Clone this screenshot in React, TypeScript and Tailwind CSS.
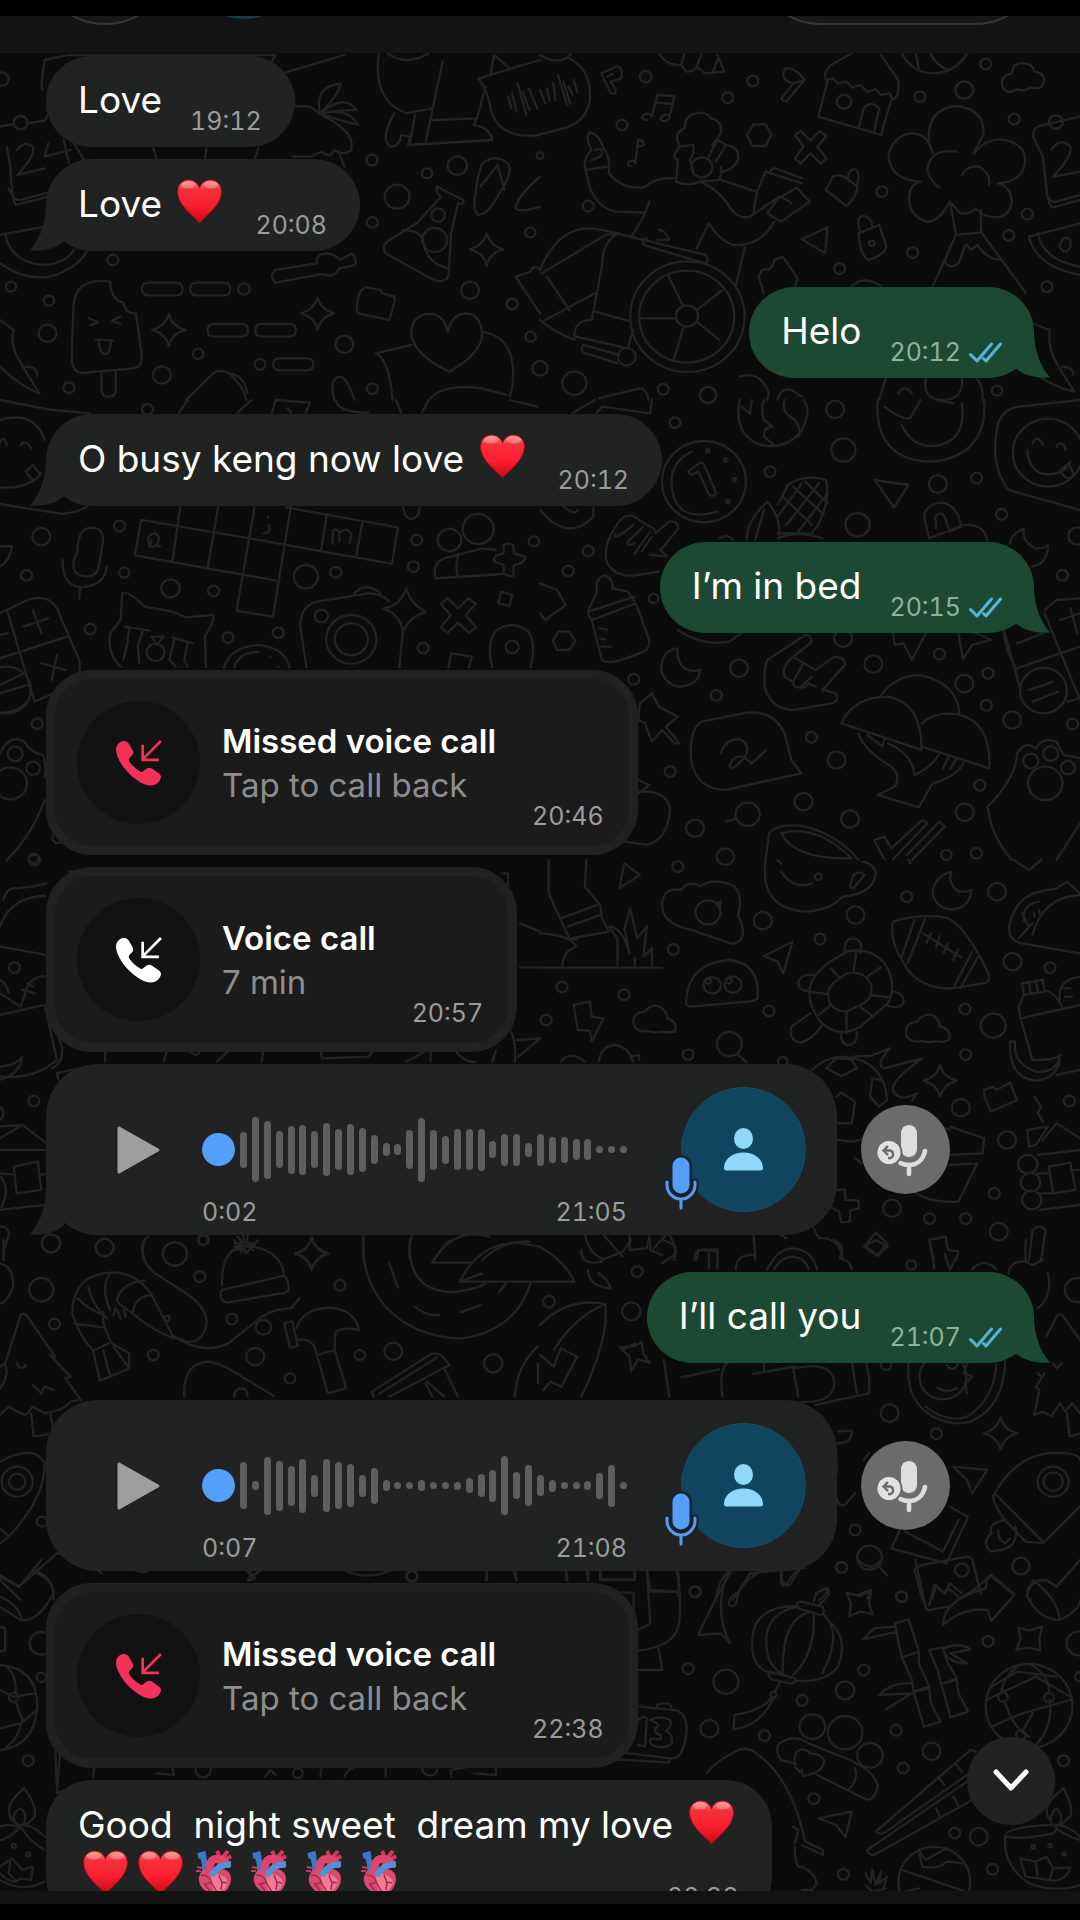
import React from "react";

interface DoodleTile {
  x: number;
  y: number;
  circles: number[][];
  stars?: number[][];
  paths: string[];
}

// Wallpaper drawings, one group per area of the background
const doodles: DoodleTile[] = [
  {
    x: 0,
    y: 0,
    circles: [
      [5, 237, 20], [328, 780, 16], [32, 860, 15], [142, 902, 15], [138, 1000, 26], [200, 1163, 16],
      [470, 1125, 26], [575, 1062, 15], [755, 1093, 16], [708, 867, 17], [1000, 1033, 26], [1080, 480, 16],
      [1240, 520, 15], [1328, 497, 28], [1153, 590, 36], [1081, 667, 16], [1540, 697, 15], [1365, 871, 26],
      [1487, 912, 16], [1541, 1010, 15], [1081, 1166, 16], [1272, 645, 20], [1262, 720, 36], [60, 368, 20],
    ],
    stars: [[490, 990], [922, 940], [1413, 748]],
    paths: [
      "M431 848H511Q530 848 530 867T511 886H431Q412 886 412 867T431 848M571 848H650Q669 848 669 867T650 886H571Q552 886 552 867T571 848",
      "M622 972H701Q720 972 720 991T701 1010H622Q603 1010 603 991T622 972M760 972H840Q859 972 859 991T840 1010H760Q741 1010 741 991T760 972M812 1075H892Q910 1075 910 1093T892 1111H812Q793 1111 793 1093T812 1075",
      "M250 852Q215 870 213 920L208 1080Q212 1118 240 1119L380 1106Q412 1105 412 1070L395 940Q365 942 358 908Q322 900 320 845Q280 838 250 852M295 1118V1175Q300 1192 317 1190Q335 1190 336 1170V1113M258 955L285 967L262 976M350 950L325 962L350 972M278 1018L328 1022M287 1020Q287 1060 305 1062Q322 1060 322 1020",
      "M20 440L30 500Q35 600 45 615L160 585M25 565Q40 605 60 600L150 575M50 450Q70 420 95 440Q105 465 50 525L130 505M140 430L130 470L205 450M185 420L200 490M0 380L40 372M78 370L130 362Q150 330 135 330M215 430L250 490",
      "M125 270Q115 270 130 180L200 165H800L780 200M830 217L1000 165M445 445L455 475M595 475L600 445M740 475L750 445",
      "M930 340Q910 260 990 250Q980 290 930 340Q1000 280 1035 330Q980 330 930 340Q1010 320 1040 375Q980 360 930 340M850 318L900 320Q930 345 960 360Q1030 400 1020 450Q1000 470 970 450L960 465Q940 465 935 455L900 470L850 470M985 460L1000 500",
      "M0 705L130 680M0 790Q110 870 210 800Q250 770 255 745M15 700Q30 790 130 795Q190 790 215 750",
      "M0 960L40 990Q30 1020 45 1060Q70 1110 115 1180Q60 1160 0 1100M75 1100Q110 1100 108 1130",
      "M800 810L920 790Q915 760 950 760Q980 765 985 780L1020 762Q1035 765 1032 795L985 805Q975 830 950 825Q925 820 920 825L800 848Q780 830 800 810",
      "M1270 560L1345 600Q1350 615 1330 610L1310 700L1302 830Q1290 850 1260 840L1120 760Q1105 740 1130 720L1210 670L1280 590Q1260 570 1270 560M1170 690Q1225 690 1230 730Q1240 790 1300 805",
      "M1100 160Q1080 300 1180 340L1255 325M1285 185L1235 430M1145 340Q1100 420 1135 440Q1160 440 1165 405L1190 410L1185 435L1430 420Q1420 380 1375 375L1385 355L1255 360M1205 345L1190 430M1385 355L1410 260M1125 160Q1180 200 1245 160",
      "M1390 235L1568 180M1390 235Q1420 280 1425 330Q1450 420 1568 405M1475 290L1485 325M1487 280L1500 335M1503 250L1528 345M1518 275L1537 330M1535 265L1560 325M1435 165L1425 220M1440 170L1480 205",
      "M1400 490Q1440 460 1475 490Q1490 520 1450 580Q1420 640 1390 645Q1370 630 1380 590Q1385 530 1400 490M1395 560L1445 495L1465 570M1568 530Q1500 590 1497 625Q1510 640 1568 620",
      "M1045 875L1060 862L1105 870L1110 880L1145 890Q1150 900 1130 960L1040 940Q1030 930 1045 875",
      "M1300 995Q1290 940 1240 942Q1190 950 1195 1010Q1210 1070 1305 1115Q1400 1060 1400 1000Q1395 940 1350 940Q1310 945 1300 995M1195 1035L1092 1060Q1130 1080 1140 1200M1400 995Q1490 1010 1490 1120Q1490 1160 1480 1190M1250 1195Q1290 1150 1400 1165L1470 1185",
      "M540 1200L620 1120Q640 1105 665 1120Q710 1160 715 1200M665 1120Q710 1125 718 1180M970 1200Q955 1130 990 1130Q1010 1140 1030 1200M1568 810Q1550 790 1540 815L1497 830L1568 940",
    ],
  },
  {
    x: 540,
    y: 0,
    circles: [
      [307, 230, 17], [238, 375, 16], [545, 293, 16], [618, 243, 16], [140, 618, 16], [883, 305, 21],
      [1103, 290, 16], [1232, 270, 26], [1294, 192, 16], [1377, 357, 16], [993, 575, 16], [1082, 758, 16],
      [870, 806, 16], [1361, 706, 16], [1415, 642, 16], [1472, 860, 16], [428, 950, 166], [426, 950, 138],
      [427, 948, 32], [252, 1070, 26], [100, 1150, 35], [358, 1168, 16], [488, 1185, 24], [470, 502, 30],
      [963, 730, 8], [1327, 1172, 15], [1498, 366, 20], [0, 467, 10], [0, 1105, 22],
    ],
    paths: [
      "M0 165Q60 200 90 162M85 175Q150 210 145 300Q135 360 80 382L0 403M0 270L15 310M20 265L28 300M38 250L45 300M52 225L78 313M68 245L88 312M82 260L95 285M98 240L107 275",
      "M178 220L225 198Q245 210 235 235L205 245L220 270Q222 285 205 280L178 220M195 230L212 222",
      "M310 360Q290 358 300 345Q320 335 325 350L340 285L390 288L375 355Q365 370 350 358Q355 340 375 345M335 308L385 312",
      "M265 498Q250 498 257 485Q275 478 277 490L285 418Q300 420 302 435L285 440",
      "M345 160Q370 200 410 195L420 160M410 195L425 215Q450 215 455 200L470 160M455 200L480 220L535 215L515 165M515 180L500 220",
      "M712 205Q740 200 768 240L715 305Q695 300 705 290L735 250Q695 240 712 205M735 250L768 240",
      "M905 160L845 195Q820 220 830 240L850 235L865 250L890 245L905 262L930 255L950 275L975 268L990 285L1015 280L1025 298Q1045 290 1040 240L990 165M835 245L808 350L990 405L1020 300M925 385L940 325Q960 300 985 325L970 395",
      "M1050 160Q1080 220 1145 220Q1210 215 1240 160M1090 160L1100 205M1135 162Q1150 200 1190 210",
      "M1345 265Q1330 230 1370 220Q1375 185 1405 190Q1430 190 1435 215Q1470 220 1462 250Q1455 270 1425 262Q1410 275 1385 268Q1360 285 1345 265",
      "M620 373H655L672 405L655 438H618L600 405L620 373",
      "M740 405L758 393L785 422L812 393L832 408L805 440L832 475L815 490L785 460L757 490L740 475L765 440L740 405",
      "M1130 430Q1120 330 1205 318Q1290 325 1288 400L1260 460M1260 460Q1300 410 1350 420Q1415 435 1408 490Q1400 545 1330 550M1330 550Q1370 560 1370 610Q1360 660 1305 650Q1280 645 1265 625Q1245 645 1220 640L1190 605Q1160 665 1125 665Q1070 650 1072 590Q1075 550 1105 545M1105 545Q1015 540 1012 465Q1030 400 1085 400Q1130 405 1140 460M1210 455Q1130 445 1125 510Q1135 550 1160 562M1225 525Q1240 495 1275 500Q1310 520 1303 555",
      "M1190 605L1208 705L1140 860M1280 630V695L1410 878M1208 705L1280 697M1195 730L1175 785Q1190 810 1215 790L1230 750Q1235 720 1250 750L1270 735Q1300 780 1335 778",
      "M1568 350L1450 378Q1430 385 1432 410L1460 470L1470 560Q1475 620 1490 622L1568 600M1470 580Q1480 610 1500 605L1568 585M1485 450Q1510 410 1540 440Q1545 470 1490 530L1568 515",
      "M850 530Q870 520 890 535L922 560Q920 590 890 618L830 570L850 530M893 535Q900 500 920 510Q930 530 920 555M925 700L985 675L1005 735Q1010 760 955 780Q930 770 925 700M930 695Q915 650 940 648Q965 655 965 680",
      "M760 718L835 682L828 760L760 718M1420 710L1568 670M1420 710Q1440 800 1568 825M1445 700Q1460 780 1568 800M1508 740Q1520 700 1540 720Q1545 755 1520 755L1508 740",
      "M145 398Q170 400 185 445Q205 470 200 520Q240 570 300 562Q340 530 395 535M145 398Q130 410 150 450Q120 480 135 520Q150 620 220 635L305 638M160 450Q190 440 175 470L150 480M135 510L195 500M318 605Q300 660 265 710",
      "M400 480Q380 470 400 450L405 435Q385 400 420 385Q420 340 465 338Q490 340 495 355Q530 360 525 400L500 435M400 480L395 545Q430 560 465 545L520 540Q530 520 525 500M490 470L515 420L540 435L510 485M540 435Q580 440 575 480Q560 510 530 515M410 440L445 435Q450 460 435 480L445 510",
      "M470 548Q520 570 550 620Q575 660 610 650L695 590L660 640L700 665L783 605L745 563L650 620M525 540L630 575L655 515L760 550M665 520Q675 500 690 508L762 535M630 575L620 640M695 590Q720 600 730 610M680 665Q640 740 560 735Q520 720 490 670L455 745M595 740L568 860",
      "M0 810Q60 660 180 690L480 765Q495 780 480 790L300 735Q295 715 310 715M5 820L190 705L230 700Q180 720 180 800L150 960M15 960L160 880M20 830L85 930M0 960Q50 1000 100 1020Q95 960 150 960M160 935L265 965M125 1035L230 1065M125 1035Q115 1060 135 1060L225 1090M105 1010L255 1045L270 990M340 720L375 720Q365 690 345 690",
      "M290 955H395M372 825L415 918M530 870L455 930M520 1020L455 965M390 1075L415 985M650 880L635 830Q645 800 660 810Q680 800 680 780L705 770L748 835L740 860M905 858Q940 825 990 858",
      "M580 1130Q640 1110 665 1180L660 1200M690 1200Q700 1160 730 1170L760 1190M985 1200L1005 1132M1120 1135Q1110 1200 1170 1200Q1230 1200 1225 1135M1040 1180Q1060 1150 1080 1180M1430 970L1480 990Q1475 1030 1490 1070Q1510 1110 1552 1175Q1500 1165 1450 1130M1515 1100Q1550 1100 1548 1125M1265 1132Q1290 1160 1285 1200M170 1195L290 1165Q310 1165 315 1200",
    ],
  },
  {
    x: 0,
    y: 400,
    circles: [
      [428, 28, 16], [120, 410, 26], [347, 378, 16], [77, 526, 16], [361, 518, 15], [495, 565, 27],
      [620, 573, 16], [262, 687, 16], [662, 713, 16], [808, 698, 16], [888, 530, 35], [975, 517, 16],
      [933, 648, 19], [1020, 718, 73], [1020, 718, 48], [1210, 420, 16], [1200, 500, 16], [1305, 420, 34],
      [1388, 387, 45], [1228, 744, 16], [1487, 741, 19], [1550, 424, 15], [108, 971, 16], [44, 1062, 22],
      [96, 1105, 20], [30, 1150, 48], [20, 870, 70], [168, 1313, 16], [452, 757, 26], [98, 1375, 14],
    ],
    paths: [
      "M0 60Q100 30 130 120M0 262Q80 270 120 220M0 312L180 342Q240 335 260 312M0 0L140 28L260 40M0 130Q10 100 20 135M60 135Q75 115 90 145M75 215L95 195L115 220Q100 260 75 215",
      "M225 455Q225 385 265 382Q305 385 298 430L287 500Q280 535 240 528Q205 520 215 480L225 455M182 480Q180 560 240 562Q305 555 310 500M232 565L230 595",
      "M410 360L725 415L1138 492L1155 382L830 322M410 360L392 466L803 542M525 312L500 486M635 312L603 504M740 315L687 632L793 650L845 315M948 350L932 453M1052 368L1034 470",
      "M435 440Q420 405 450 400Q470 410 455 435Q430 450 440 420M455 435L465 440M780 375Q790 400 765 400M778 350V352M965 430L968 390Q990 380 985 425M985 400Q1010 375 1020 405L1015 430",
      "M0 640L80 600Q140 580 165 625L230 780Q235 820 225 850L100 905L20 630M0 775L195 710M68 680L140 655M95 630L120 700M120 790L190 810M165 765L150 840M0 705L22 700M0 855L70 820M0 880L80 855M0 940Q90 930 90 870",
      "M350 800Q310 760 320 700L350 660L355 580Q370 570 420 620L500 635L540 652L620 645Q620 670 595 710L598 800M362 680L435 692M500 712L560 730M375 685L370 730L358 780M415 690L400 740L405 790M505 720L492 780L510 800M545 728L535 780L545 800M440 710H475L455 735L440 710",
      "M650 803Q670 740 750 735Q830 745 840 803M680 803Q690 760 750 755M785 770V772M808 800V802",
      "M890 803L872 680Q870 620 920 605L1070 580Q1110 580 1130 605M1170 690L1160 803M1025 585Q1060 540 1105 580M1113 625Q1160 620 1180 565Q1190 610 1235 635Q1190 650 1170 695Q1160 640 1113 625",
      "M1280 612L1300 595L1330 625L1360 595L1382 612L1352 645L1382 682L1362 698L1330 668L1300 698L1280 682L1308 645L1280 612",
      "M1455 575L1487 585L1480 618L1447 610L1455 575M1310 760L1370 770L1362 803M1310 760L1302 803M1430 803Q1400 680 1487 675Q1570 680 1540 803",
      "M1265 535Q1250 480 1310 470L1400 445L1440 450M1265 535L1460 522M1330 470Q1320 500 1330 530M1462 435Q1475 425 1490 435L1492 460L1525 470Q1525 490 1492 495L1490 528Q1475 530 1462 520V495L1435 485Q1430 465 1462 460V435",
      "M0 440L35 438Q30 480 0 500M520 38L545 0M690 38L730 0M790 38L800 0L900 8L888 38M975 0Q980 38 1070 38M1150 0L1165 38M1225 38L1245 0M1480 0L1560 20M835 25L845 38M1170 312Q1170 355 1195 357Q1220 350 1218 320",
      "M0 1060Q30 1000 70 1025Q90 1060 125 1065Q135 1100 130 1130M130 1200Q90 1310 20 1380",
    ],
  },
  {
    x: 540,
    y: 400,
    circles: [
      [392, 68, 16], [668, 215, 16], [857, 28, 26], [881, 150, 35], [922, 374, 35], [476, 245, 122],
      [1475, 158, 102], [1155, 252, 26], [1268, 234, 16], [1340, 343, 16], [140, 453, 16], [82, 513, 16],
      [578, 805, 26], [968, 792, 26], [1160, 762, 16], [880, 715, 26], [1517, 526, 16], [1232, 851, 26],
      [1301, 820, 16], [1296, 916, 16], [512, 886, 16], [272, 838, 16], [788, 1012, 16], [378, 1115, 16],
      [861, 1080, 26], [1371, 960, 26], [1546, 972, 16], [1277, 1156, 16], [765, 1205, 26], [603, 1243, 35],
      [450, 1285, 26], [900, 1257, 26], [1233, 1237, 26], [1180, 1365, 15], [1267, 1360, 16], [538, 1370, 25],
      [1425, 1083, 22], [1483, 1061, 22], [1533, 1103, 20], [1467, 1150, 50], [1462, 872, 68], [1560, 408, 26],
      [487, 152, 5], [539, 180, 5], [564, 239, 5], [545, 305, 5], [330, 595, 14],
    ],
    paths: [
      "M515 335Q400 370 384 270Q370 190 440 155M430 215L465 187L475 190L512 280Q500 295 490 282L460 215L440 225L430 215",
      "M580 0Q560 100 640 135Q720 150 760 90Q790 30 765 0M650 0Q640 30 650 60L675 80Q650 80 650 110L680 135M710 0Q700 40 740 60Q760 90 750 110M615 0L610 40L585 20",
      "M980 0Q970 180 1135 185Q1300 170 1290 0M1050 75Q1080 140 1140 138Q1240 130 1225 10M1000 20Q1050 60 1075 55L1105 0M1150 0L1200 10",
      "M1568 0L1390 20Q1330 30 1325 100Q1310 200 1360 270L1568 330M1415 150Q1420 230 1490 222Q1530 215 1540 185M1430 130Q1445 100 1460 135M1500 140Q1515 115 1527 150M1510 210L1535 190L1550 225Q1530 250 1510 210",
      "M690 315L720 255Q770 220 830 240Q845 290 810 370L790 400L690 400M600 420Q600 360 660 305Q700 350 695 415M625 420L650 330M705 290L790 375M735 260L825 345M770 245L835 310M690 350L760 250M715 375L810 250M750 395L835 280M690 415Q750 390 820 415",
      "M972 240L1070 255L1028 322L972 240M1130 415L1115 350Q1120 310 1170 308Q1215 320 1222 380L1190 395M1150 385L1148 350Q1165 330 1175 350L1190 395M1130 415L1230 375Q1290 370 1298 420M1365 430Q1370 400 1405 385Q1400 430 1440 445Q1470 445 1475 435Q1475 490 1430 500",
      "M220 380Q240 340 270 348L320 380Q340 390 335 400L375 365Q400 360 402 385L350 450L370 470L320 465M220 380Q180 440 195 490Q220 530 270 527L345 515M240 400L270 375M255 425L300 380M275 460L320 395M295 455L325 410M240 400Q210 420 220 400M255 425Q250 440 275 430",
      "M0 550L50 570L75 615L15 660L0 640M0 330Q80 430 155 350L155 312M60 312Q100 350 110 330M95 38L160 0M165 38L180 20L320 40L325 0",
      "M165 580Q160 530 190 527Q215 540 210 565L255 575L278 610L150 660Q130 640 150 610L165 580M140 635L275 590M150 660L180 780Q200 800 300 755Q325 740 315 715L280 615M172 685L195 688M175 715L190 718M178 740L205 740",
      "M53 695H85L103 723L85 750H50L37 723L53 695M400 745Q350 750 352 815Q370 860 410 860Q460 855 465 810Q430 820 410 795Q395 770 400 745",
      "M400 690Q470 740 550 725L590 695M1025 700L1030 735L1055 730L1080 780L1120 700M1215 700L1228 778L1255 735L1310 720L1260 697M520 415Q545 400 560 420",
      "M660 780L770 705Q795 710 785 730L735 770L800 810L855 770Q885 770 885 795L820 870L860 880Q870 905 845 910L740 930Q670 930 652 860Q650 800 660 780M735 770Q700 800 710 830L735 845M735 845L765 790M735 845Q735 865 755 862L790 830M755 862Q770 865 780 850L800 860",
      "M325 880L345 920L400 950L365 980L405 1030L390 1030L355 990L325 1025L305 970L285 960L290 910L325 880",
      "M470 965L600 938Q680 930 710 1000L730 1080L758 1120L540 1170Q460 1170 440 1090Q430 990 470 965M525 1060Q540 1015 580 1018Q615 1035 595 1070Q560 1115 550 1100Q560 1065 590 1070L615 1090L655 1052",
      "M875 970Q910 890 1010 890Q1110 910 1108 1050L875 970M990 885Q1040 820 1110 827Q1210 850 1218 940M1108 970Q1150 930 1220 945Q1310 970 1305 1105L1108 1040M925 1000Q940 1050 1020 1100Q1050 1130 1030 1160L980 1185L1100 1222L1140 1150Q1210 1130 1230 1090M1010 1030Q1080 1060 1088 1125Q1140 1100 1160 1060M950 1005L995 1040L1000 1015M1170 1105L1190 1065L1210 1075L1190 1108",
      "M1385 1060Q1410 1020 1440 1045Q1460 1010 1500 1025L1520 1065L1568 1075M1385 1060Q1385 1130 1300 1220Q1310 1310 1370 1380M1568 1270L1500 1380",
      "M1465 630L1500 600L1568 595M1350 700L1395 870M1465 640L1568 900M1385 805L1568 740M1345 690Q1350 750 1385 810M1385 730L1460 700M1530 905L1568 895M1510 660L1568 640M1540 625L1560 700M1420 870L1490 845M1430 905L1505 875",
      "M973 1320L1000 1310L1020 1345L1110 1260L1125 1270L1025 1378M1065 1365L1160 1265L1175 1280L1080 1380M970 1320L1000 1378",
      "M655 1380L665 1300Q690 1270 760 1278Q860 1300 925 1380M700 1300Q800 1270 905 1375Q740 1380 700 1300M540 1265L570 1255M285 1140L318 1155L285 1180M290 1175Q370 1170 378 1230Q370 1320 310 1335L230 1322",
    ],
  },
  {
    x: 0,
    y: 860,
    circles: [
      [42, 323, 16], [98, 723, 16], [148, 1150, 27], [304, 1163, 26], [508, 1182, 35], [590, 1140, 16],
      [568, 570, 14], [100, 0, 16],
    ],
    stars: [[905, 1182]],
    paths: [
      "M0 200Q30 110 130 108M10 120Q20 80 50 85Q100 80 135 70M0 260L135 285M0 465L130 435L165 600Q100 660 0 650M155 490L180 560Q185 610 150 625M0 620Q50 615 65 590Q60 640 0 660M60 440L80 380Q100 345 130 350M65 390L100 400M0 360Q20 370 25 400M0 400L60 440M80 370L95 380",
      "M0 740Q20 760 0 780M0 800L65 795L135 850M0 835L65 795M0 870H130M0 940L45 945M40 920L110 905L120 990L48 1000L40 920M120 945L140 940M0 950Q30 980 5 1040M0 1050L130 1035",
      "M0 1100Q30 1100 25 1130Q10 1160 10 1200M420 1200Q400 1150 430 1130M1055 1200V1120M1190 1200Q1185 1150 1200 1120M1260 1200Q1320 1100 1420 1130M1400 1200Q1460 1140 1540 1145",
      "M705 1120L710 1145M690 1130L705 1148M720 1125L715 1150M680 1150H705M740 1150H715M690 1170L710 1155M735 1170L718 1155M710 1175V1160",
      "M305 605V571M475 605L485 571M760 605L765 571M630 605L665 571M930 571L935 595L1070 590L1085 571M1180 605L1240 571M1250 571V605M1320 571Q1350 610 1380 605M1430 605L1440 571M1480 510Q1500 540 1495 605M1500 540L1568 535L1505 590M1510 190L1568 215M1510 322H1568M200 35H460M205 35L215 60M1455 40H1475V80M165 640L230 625M165 640L170 660",
    ],
  },
  {
    x: 540,
    y: 860,
    circles: [
      [400, 20, 16], [647, 182, 26], [488, 157, 36], [916, 165, 26], [1065, 110, 16], [813, 237, 16],
      [387, 268, 16], [64, 381, 16], [244, 404, 16], [18, 480, 16], [500, 376, 25], [560, 374, 25],
      [665, 453, 16], [550, 552, 36], [430, 584, 16], [1327, 95, 26], [1372, 305, 26], [1481, 323, 16],
      [1234, 447, 16], [1316, 497, 36], [1236, 584, 16], [1222, 743, 26], [1537, 723, 16], [1356, 840, 26],
      [1319, 1000, 16], [1416, 913, 28], [1424, 967, 28], [1428, 1020, 28], [1022, 1045, 26], [1131, 1076, 16],
      [1236, 1076, 16], [1332, 1115, 26], [808, 50, 10], [488, 363, 8], [548, 362, 8], [705, 605, 14],
    ],
    stars: [[1162, 662]],
    paths: [
      "M25 0V100L58 175L85 235L105 240M135 0L130 80L175 135L180 175L200 215M60 175L165 135M80 200L175 165M90 235L200 215M0 220Q90 225 105 260Q65 275 65 322M0 323H355M200 200L225 235V320M205 200Q240 205 260 280L245 205L262 145L282 235L310 200L300 290L325 265V320M275 295V320",
      "M245 10L290 45L230 85L245 10M355 130Q360 80 410 90Q430 60 465 78Q510 50 565 80Q590 110 575 165Q610 240 560 252L440 210Q350 190 355 130M510 130L525 125L522 145",
      "M655 0Q635 150 780 155Q840 150 880 110Q970 100 975 40Q970 10 935 5M700 35Q735 90 790 70M900 80L910 45Q930 30 942 45L910 85L900 80M690 0L700 10M1070 0L1075 10",
      "M1195 35Q1140 50 1140 105Q1155 150 1200 148Q1250 140 1252 90Q1215 105 1200 80Q1185 60 1195 35M1375 0L1420 30L1455 0M650 288L733 245L706 340L690 305L650 288",
      "M425 420Q430 310 550 300Q640 310 632 415Q620 425 600 425L440 440Q420 440 425 420",
      "M835 310L890 275Q960 260 1000 310Q1040 370 1010 430L930 500Q860 540 810 480Q760 400 800 345L835 310M850 370L890 340Q940 330 960 370Q970 410 940 430L890 455Q830 450 838 390L850 370M918 280L910 335M990 322L950 350M1015 412L960 405M968 470L930 440M890 520V455M810 465L845 435M778 395L835 402M845 325L870 355M885 280Q880 235 910 235Q940 240 930 278M795 345Q750 340 750 375Q760 395 780 392M1025 395Q1060 400 1055 430Q1040 450 1005 435M785 460L730 500Q720 540 755 548Q790 540 820 495M875 520Q870 550 895 556Q925 550 920 515",
      "M1025 185Q1100 160 1180 173Q1230 190 1300 335Q1310 360 1295 368L1200 385Q1130 390 1080 345Q1010 250 1025 185M1088 180L1050 290M1118 178L1068 308M1275 285L1220 385M1255 275L1200 385M1115 222L1222 292M1135 220L1122 250M1160 228L1150 262M1185 250L1172 280M1215 268L1200 300",
      "M1568 100L1530 65L1500 85L1450 95Q1380 110 1362 200Q1360 245 1400 250L1568 280M1430 225Q1460 110 1568 105M1405 185Q1400 130 1450 125M1390 235L1430 190M1420 200L1400 160M1435 160V170M1450 150V160",
      "M98 435L145 425L150 470L185 475L150 545L145 512L110 510L98 435M275 500Q260 460 305 455Q325 425 355 445Q370 460 370 475Q400 485 392 515Q370 520 355 515Q330 520 310 512Q290 520 275 500M1065 530Q1055 490 1095 485Q1115 455 1145 468Q1160 480 1160 500Q1195 505 1187 540Q1170 550 1150 543Q1130 550 1110 543Q1080 550 1065 530",
      "M1400 370L1460 360L1465 395L1405 405L1400 370M1420 365L1425 400M1440 362L1445 398M1405 405L1390 440L1395 475L1430 600M1465 390Q1500 400 1515 440M1395 475L1568 435M1510 420Q1500 360 1568 350M1515 385H1540M1525 410H1545M1430 600Q1500 600 1510 585Q1500 640 1440 635Q1370 610 1380 545L1365 545Q1360 655 1440 662Q1500 655 1510 600M1500 645L1568 630",
      "M60 605Q90 570 130 605M170 605Q180 555 220 555Q260 565 270 605M265 590L288 585V598M572 582L600 607M790 630Q830 590 880 590Q1000 600 1008 720L985 740L958 710L965 655L990 660M830 625L860 595L905 598L920 625L875 648L830 625M860 710L875 698L915 725L905 790H865M910 590L960 588L1015 565Q970 620 1000 625L1110 595Q1020 660 1025 690Q1040 730 1095 700L1080 722",
      "M1290 690L1315 680L1325 690L1365 668L1385 720L1310 755L1290 710V690M1435 710L1455 740L1445 760L1460 785M1190 800L1290 835L1285 880L1190 885M1270 910L1215 1025Q1130 1030 1085 995M1165 800L1190 810M1190 915L1270 910",
      "M860 990L885 988L887 1020L925 1022V1045L900 1052V1085L875 1087L868 1055L840 1040M915 895L935 910M862 840L905 845L935 838",
      "M1415 810L1475 800L1440 855L1420 860L1415 810M1460 840L1500 790L1568 835M1445 885L1568 870M1478 920L1540 908L1555 990L1490 1000L1478 920M1445 940H1480M1450 1000H1490M1450 1050L1568 1035M1540 930H1568",
      "M975 1118L1008 1150L980 1185L942 1158L975 1118M1130 1140L1178 1130L1185 1170L1215 1175L1210 1200M1130 1140L1145 1200M1420 1200L1430 1110Q1450 1090 1468 1110L1455 1200M625 1200L620 1120M790 1095L810 1135Q870 1130 880 1200M130 1120Q140 1180 180 1195M180 1120L240 1190M260 1120V1170L310 1165L320 1120M330 1165L370 1120Q400 1150 390 1200M455 1200L460 1170L515 1175V1200M690 1120L715 1135",
    ],
  },
  {
    x: 0,
    y: 1240,
    circles: [
      [120, 149, 35], [158, 252, 16], [148, 10, 27], [304, 22, 26], [508, 42, 35], [580, 110, 16],
      [673, 237, 16], [765, 262, 22], [741, 350, 26], [445, 345, 16], [842, 415, 15], [987, 136, 16],
      [1045, 345, 15], [1142, 334, 26], [1432, 370, 27], [50, 725, 45], [50, 725, 24], [122, 845, 15],
      [1196, 1010, 16], [590, 0, 14], [485, 235, 8],
    ],
    stars: [[905, 40]],
    paths: [
      "M0 70Q40 80 38 140Q20 190 0 190M10 0V60",
      "M0 380L15 370L60 225Q70 215 80 230L160 350L145 345L205 410L190 415L235 480L205 485L190 500L170 510L150 515L130 520L95 500L75 525L50 515L25 500L0 525M15 370L20 400L10 430L0 445M48 370Q60 395 75 375M95 435L120 460L130 440L155 450M90 520L98 590L145 582M145 515L155 570",
      "M210 220Q210 100 330 97Q400 100 440 165L505 295M210 220Q230 290 270 330L290 422L320 410L375 385V340L325 310L315 290Q295 250 300 215M505 295Q440 270 385 220M385 220Q340 190 340 180Q350 130 420 122M385 220Q390 170 440 165M320 210Q290 140 320 100M335 205L330 225M310 235Q270 200 255 140M225 175Q260 210 300 225M215 250L300 262M275 330L315 310M300 330L320 410M330 320L375 385M340 210L350 235M360 210L365 230",
      "M420 0Q400 60 450 100L540 160Q600 200 600 250Q590 310 540 305L505 290Q600 350 670 305L760 230Q800 205 845 205L870 175",
      "M645 135Q640 20 720 18Q820 30 825 110M645 150L820 108Q840 110 838 150Q830 160 815 160L660 188Q640 185 640 160L645 150M680 0L715 40M700 0V40M750 0L715 40M680 20L740 15",
      "M825 250L848 243L865 318L842 322L825 250M860 265Q880 205 960 203Q1030 210 1042 270Q1000 260 975 275Q970 300 972 330L1005 445L952 460L920 345Q910 290 865 300M920 345L972 330",
      "M1055 0Q1050 120 1120 200Q1200 290 1340 296Q1500 270 1540 130M1190 0Q1180 150 1310 157Q1380 150 1410 130M1130 70L1155 142M1205 200Q1240 230 1275 225M1338 217L1395 195M1450 155L1470 130M1255 68H1375M1335 125H1568M1255 68Q1290 10 1310 0M1335 125Q1390 10 1500 8L1568 20M1335 125L1400 100",
      "M535 470Q530 370 605 365Q640 370 670 390L795 468M680 470Q680 445 705 445Q720 450 718 470M1080 455L1255 340Q1280 340 1285 350L1305 375L1130 470M1080 455L1085 470M1100 462L1270 352M1290 385L1330 470M1235 430L1255 470M1240 425L1290 470M1495 470Q1500 380 1560 320M1562 370V430",
      "M0 665Q100 610 130 670Q130 780 20 895L0 910M0 865L25 890M0 1010L55 1040L165 940Q230 945 295 1000M95 990Q160 1010 155 1080M0 1020L60 1080M360 984L420 998L440 984M710 984L730 1010L765 984M720 1020L730 1005M870 990L920 984M990 984Q1060 1030 1150 984M1410 1020L1415 985L1440 990L1455 984M1495 984L1500 1020",
    ],
  },
  {
    x: 540,
    y: 1240,
    circles: [
      [282, 95, 16], [26, 185, 17], [265, 214, 27], [1015, 519, 26], [1151, 581, 16], [1078, 75, 14],
      [1170, 410, 68], [915, 870, 16], [875, 983, 16], [957, 953, 36], [450, 1055, 16], [1396, 978, 25],
      [1225, 990, 20], [1490, 725, 45], [1490, 725, 28], [1005, 375, 15], [1560, 150, 36], [1050, 1070, 15],
    ],
    stars: [[1337, 580]],
    paths: [
      "M0 20Q70 60 100 125H0M120 30Q120 80 180 65M140 90Q140 140 205 145Q200 120 170 100M180 60L240 35L265 0M320 0V30L355 45M355 0Q400 10 395 40L355 70M450 60Q445 30 480 28H515V85M490 30V85M568 88Q570 40 625 45L620 0M660 88Q690 25 735 25Q790 30 805 88M855 0Q890 20 870 55Q900 60 905 88M680 88Q700 50 735 50Q770 55 780 88M940 20L975 0L1010 20L980 48L940 20M1130 0L1145 85M1175 40L1190 90L1215 40",
      "M275 310L240 330L232 322L260 350L265 392L285 358L318 368L300 340L295 305L275 318L232 322",
      "M0 255Q80 170 190 192Q200 300 120 470M190 192Q100 230 40 330M0 345L40 380L60 325L108 350L62 440L30 425L10 450",
      "M360 361L375 470M410 412L520 388M530 470Q515 370 560 361M620 402L740 380L650 395V361M735 385L750 470M740 385Q850 360 855 430Q850 490 760 485M905 361L920 460M945 361Q960 410 955 460L800 495",
      "M1070 370Q1060 480 1140 530Q1200 560 1250 545Q1350 500 1350 361M1120 500Q1180 550 1240 530Q1320 480 1325 370M1155 445Q1185 460 1210 445M1240 370L1230 400L1255 410L1235 430L1240 460M1180 375Q1200 400 1215 370M1255 88Q1290 50 1325 88M1360 100Q1365 60 1410 65L1430 75L1460 60M1410 65V0M1475 100Q1490 170 1445 205",
      "M1470 290L1500 230Q1510 215 1520 230L1568 300M1435 525L1450 450L1440 440L1465 400M1435 525L1460 515L1485 528L1510 490L1525 515L1545 490L1568 520M1455 410L1445 400M1530 520L1538 590L1568 580M1490 370L1500 385L1515 370",
      "M865 575L905 572Q910 610 860 610M860 770Q870 810 890 790L915 760M940 660L955 640M1200 680L1298 690L1255 760L1240 720L1200 680M1190 800L1243 830L1180 970L1020 925L1045 870M1060 875L1170 935L1215 840M985 980L1008 1005",
      "M1315 770Q1380 640 1500 638Q1568 640 1568 660M1315 770Q1320 800 1350 840L1410 905L1460 910L1568 800M1325 765L1460 905M1350 840Q1300 850 1310 880Q1280 910 1310 935Q1350 930 1370 915Q1390 880 1380 860M1330 870Q1330 900 1350 910L1365 895",
      "M1090 1000Q1080 985 1110 975L1240 950Q1255 950 1258 970L1280 1060M1090 1000L1110 1080M1140 1075L1150 1035L1175 1060L1190 1030L1225 1060M1210 1080L1260 1050L1310 1005L1375 1060M1568 960L1500 1040L1470 1020Q1420 1020 1415 1070L1425 1080",
      "M75 984V1020M140 984V1020M175 984V1018H275V984M310 984L320 1050L400 1055Q410 1010 395 984M400 1055L405 1080M510 1080Q520 1010 560 984M560 1080L610 1000L770 984M700 990V1030Q710 1050 730 1010L755 985M800 1060L835 1045Q830 1070 810 1080M890 1060L920 1065L960 1050L950 1075M860 640L862 700",
    ],
  },
  {
    x: 0,
    y: 1560,
    circles: [
      [120, 250, 34], [82, 602, 16], [1196, 47, 16], [40, 412, 14], [120, 352, 14], [40, 857, 6],
      [82, 883, 6], [590, 630, 22], [865, 640, 14], [1248, 625, 22],
    ],
    paths: [
      "M0 45L55 80L120 0M95 35Q155 55 155 100Q110 190 60 180L0 140M0 110Q50 130 65 180M0 200L15 205V270L0 275",
      "M0 315Q110 325 108 440Q100 560 0 570M0 390L40 410L100 400M45 425L65 480Q50 540 20 560M0 505L60 490L108 450M20 320Q50 350 45 400",
      "M160 545L165 680M175 570L165 700L185 690M70 685Q110 740 100 770Q80 800 55 795Q20 780 28 735Q40 710 70 685M45 790Q30 760 60 745Q80 760 70 790M60 800Q20 840 0 840M60 800Q90 850 130 870M0 800Q20 790 55 800M70 795Q100 800 130 830M0 960Q60 1000 130 965M0 920L35 895L65 930L95 920L90 960L60 955Q40 980 0 940M30 900L25 940L45 960",
      "M270 650L275 618M455 640L505 645L500 618M770 650L785 630L800 645M930 650L935 618M1000 650Q1010 625 1040 618M1120 618V650M1310 650L1310 630L1365 620M1375 640L1440 645V618M720 25L740 55L720 62M1415 60L1412 30L1440 25M1490 25L1500 62",
    ],
  },
  {
    x: 540,
    y: 1560,
    circles: [
      [450, 96, 16], [876, 22, 16], [1050, 110, 16], [1301, 244, 16], [430, 326, 16], [540, 365, 36],
      [940, 330, 16], [886, 391, 27], [761, 421, 16], [492, 506, 26], [652, 527, 16], [791, 500, 37],
      [886, 518, 50], [958, 586, 37], [1034, 511, 16], [1137, 574, 26], [1054, 624, 16], [795, 716, 16],
      [1204, 819, 16], [1274, 830, 26], [881, 943, 16], [1314, 928, 16], [1520, 602, 16], [1420, 438, 126],
      [1344, 411, 14], [1478, 413, 14], [1396, 525, 14], [678, 404, 9], [1432, 861, 5], [1481, 857, 5],
      [1522, 882, 5], [1565, 250, 36], [1145, 965, 104], [1568, 350, 14],
    ],
    paths: [
      "M620 210Q640 140 740 138M620 210Q600 330 680 340M750 140Q640 160 660 280Q670 330 720 350M790 155Q700 170 705 345M795 165Q800 280 735 345M825 165Q880 220 820 340M830 175Q900 230 865 320Q830 370 740 362M760 125Q740 125 750 145L815 165Q830 160 820 140L760 125M795 125Q800 90 835 85Q850 100 810 135M665 335L740 355Q745 370 725 370L675 358Q660 350 665 335M698 365L680 398M675 410Q650 450 565 465L562 508Q640 500 680 410",
      "M890 98L930 108L962 92L955 130L965 162L930 155L898 168L903 130L890 98M1388 202L1420 212L1458 200L1450 235L1452 272L1420 262L1383 270L1395 235L1388 202",
      "M1030 190L1070 178L1100 275L1050 292L1030 190M1050 292L1100 275L1100 310L1130 380L1085 395L1080 360L1050 292M1085 395L1130 385L1135 430L1163 485L1115 500L1085 395M1130 270L1170 262L1180 300L1210 355L1165 372L1155 330L1130 270M1165 372L1210 360L1215 400L1243 455L1192 472L1165 372M1030 200L970 205L938 238L1035 215M1080 370Q1020 365 985 405L1080 400L1005 448M1170 265Q1220 245 1250 268L1190 280L1240 310Q1180 310 1170 265",
      "M1090 0L1120 145Q1125 155 1140 148L1185 140M1130 135L1145 75L1175 100L1185 85L1215 110M1170 195Q1170 120 1295 85Q1295 50 1310 48L1377 105L1310 183L1300 150Q1230 140 1170 195M1255 0L1275 80M985 20L1008 46M1568 0L1500 80L1470 60Q1410 60 1415 110Q1450 180 1510 180Q1568 150 1568 120M1430 60Q1500 110 1510 180M925 0Q960 40 990 0",
      "M560 25Q500 130 460 225L525 220L552 250M550 25Q500 150 552 250M700 25Q700 80 725 75L755 25M570 100Q545 115 550 135Q570 150 575 100Q600 50 660 25M75 25L80 62M135 25L140 62M175 25V60H275V25M310 25L320 190L285 210M395 25Q410 80 405 180Q400 260 285 272M320 95H400M345 268L355 330H285M235 98H272V150",
      "M290 440L400 452Q430 470 425 520Q415 600 380 595L240 578M340 440Q335 430 370 430Q385 435 380 450M375 595V608L210 597M285 480L300 470L310 475L305 560L285 555M320 480Q350 465 378 480Q385 500 365 512Q385 520 383 550Q360 570 325 555Q310 540 330 535Q355 545 350 525Q330 520 335 505Q350 495 340 490L320 480",
      "M700 600Q680 570 695 550Q740 520 780 550L900 600Q980 640 980 680Q970 730 940 715L805 645M700 600L745 612M765 645L740 620Q735 570 760 568Q780 570 782 580Q820 580 825 605Q820 640 765 648L760 630M915 625Q925 660 895 690",
      "M485 640Q500 610 580 568Q610 560 640 590Q730 660 770 845L822 870V885L760 855M735 800L750 810L740 850M740 860Q740 930 760 920Q800 940 803 970L790 990H760",
      "M975 815L1250 570L1265 575M975 815Q985 825 1000 818L1240 645M950 870L1240 665M950 870Q950 885 970 885L1255 720M1155 650L1175 675M1205 610L1225 635M1150 745L1160 768M1200 710L1215 738",
      "M808 775L905 755L887 832L860 795L808 775M945 975L965 995L1005 985M945 940L960 970L965 930L975 975L990 935L985 970L1008 950L995 990",
      "M1052 930L1250 1000M1100 870L1110 920Q1160 930 1180 905L1230 910M1180 865L1120 900M1100 870Q1110 890 1120 900M1060 995L1100 985",
      "M1295 420L1440 350L1540 410M1350 425Q1370 500 1420 530M1310 500L1400 460L1540 420M1480 420Q1490 500 1440 555M1430 460L1400 515M1385 320Q1340 360 1340 400M1420 312Q1480 340 1478 400M1310 380L1385 335L1500 350",
      "M1350 830Q1350 800 1490 795Q1510 805 1490 820Q1400 840 1350 830Q1345 920 1420 970Q1500 1000 1568 975M1500 795Q1540 800 1568 830M1500 805Q1530 830 1568 840M1480 780Q1450 740 1520 685Q1550 740 1540 770L1510 795M1485 790Q1480 760 1500 745Q1520 765 1510 790M1395 895L1440 905L1470 890L1490 925L1540 922Q1530 960 1490 962L1410 950Q1400 920 1395 895M1440 905L1445 955M1490 925L1480 960",
    ],
  },
];

function starPath(x: number, y: number) {
  return `M${x} ${y - 48}Q${x + 8} ${y - 12} ${x + 48} ${y}Q${x + 10} ${y + 10} ${x} ${y + 48}Q${x - 8} ${y + 12} ${x - 48} ${y}Q${x - 10} ${y - 10} ${x} ${y - 48}Z`;
}

function Wallpaper() {
  return (
    <svg
      className="absolute inset-0 h-full w-full"
      viewBox="0 53 1080 1838"
      preserveAspectRatio="xMidYMin slice"
      fill="none"
      stroke="#222323"
      strokeWidth="2.300"
      strokeLinecap="round"
      strokeLinejoin="round"
      aria-hidden="true"
    >
      {doodles.map((tile) => (
        <g
          key={`${tile.x}-${tile.y}`}
          transform={`translate(${tile.x} ${tile.y}) scale(0.3444 0.3333)`}
        >
          {tile.circles.map(([cx, cy, r]) => (
            <circle key={`${cx}-${cy}-${r}`} cx={cx} cy={cy} r={r} vectorEffect="non-scaling-stroke" />
          ))}
          {(tile.stars || []).map(([x, y]) => (
            <path key={`${x}-${y}`} d={starPath(x, y)} vectorEffect="non-scaling-stroke" />
          ))}
          {tile.paths.map((d) => (
            <path key={d} d={d} vectorEffect="non-scaling-stroke" />
          ))}
        </g>
      ))}
    </svg>
  );
}

function Heart() {
  return (
    <svg
      className="inline-block h-[45px] w-[55px] align-[-7px]"
      viewBox="0 0 55 45"
      role="img"
      aria-label="red heart"
    >
      <defs>
        <linearGradient id="heartRed" x1="0" y1="0" x2="0" y2="1">
          <stop offset="0" stopColor="#f98a86" />
          <stop offset="0.22" stopColor="#f5303a" />
          <stop offset="0.6" stopColor="#fa1e30" />
          <stop offset="1" stopColor="#c80a14" />
        </linearGradient>
      </defs>
      <path
        d="M27.500 44C22 37 6 27 5.500 13C5.500 5 11 1 16.500 1C22 1 26 4.500 27.500 9C29 4.500 33 1 38.500 1C44 1 49.500 5 49.500 13C49 27 33 37 27.500 44Z"
        fill="url(#heartRed)"
        stroke="#a30f14"
        strokeWidth="1"
      />
      <ellipse cx="16" cy="6" rx="7" ry="3.500" fill="#fff" opacity="0.25" />
      <ellipse cx="39" cy="6" rx="7" ry="3.500" fill="#fff" opacity="0.25" />
    </svg>
  );
}

function AnatomicalHeart() {
  return (
    <svg
      className="inline-block h-[45px] w-[55px] align-[-7px]"
      viewBox="0 0 55 45"
      role="img"
      aria-label="anatomical heart"
    >
      <g fill="none" strokeLinecap="butt">
        <path d="M31 17V8Q31 4 29 1M34 8L40 1M37 10L43 6" stroke="#d5365c" strokeWidth="4" />
        <path d="M17 23Q18 13 14 5M10 6L18 4" stroke="#3e78c4" strokeWidth="6" />
        <path d="M22 24Q20 8 30 9Q38 9 38 18" stroke="#e0446c" strokeWidth="8" />
        <path d="M9 17L14 18M8 21L13 21" stroke="#c43a60" strokeWidth="2" />
      </g>
      <path
        d="M13 22C17 17 23 19 27 22C34 16 43 20 43 29C43 37 36 45 29 45C20 45 9 36 11 27Z"
        fill="#d94a72"
      />
      <path d="M24 24C30 22 38 26 40 32C38 40 33 43 28 43C23 38 22 30 24 24Z" fill="#f07a92" />
      <path d="M24 26Q28 15 43 14" stroke="#4f92d6" strokeWidth="6" fill="none" />
      <path
        d="M13 25Q22 25 24 34L29 42M24 32L18 34M31 25L34 33L33 40M34 32L39 33M16 33L22 41"
        stroke="#a82850"
        strokeWidth="1.500"
        fill="none"
      />
    </svg>
  );
}

function Ticks() {
  return (
    <svg
      className="h-[21px] w-[33px]"
      viewBox="0 0 33 21"
      fill="none"
      stroke="#58b4d6"
      strokeWidth="3"
      strokeLinecap="round"
      strokeLinejoin="round"
      role="img"
      aria-label="Read"
    >
      <path d="M1.500 12.500L8 19L22.500 2M14.500 16.500L17 19L31.500 2" />
    </svg>
  );
}

function Tail({ mine }: { mine?: boolean }) {
  return (
    <svg
      className={
        mine
          ? "absolute -right-4 bottom-0 h-12 w-12 text-[#1b4933]"
          : "absolute -left-4 bottom-0 h-12 w-12 -scale-x-100 text-[#212322]"
      }
      viewBox="0 0 48 48"
      fill="currentColor"
      aria-hidden="true"
    >
      <path d="M32 0C32 20 38 36 48 47.500C36 48.500 23 46 14.500 39L8 20Z" />
    </svg>
  );
}

interface MessageProps {
  time: string;
  mine?: boolean;
  tail?: boolean;
  stacked?: boolean;
  children: React.ReactNode;
}

function Message({ time, mine, tail, stacked, children }: MessageProps) {
  return (
    <li
      className={`relative w-fit rounded-[46px] pt-5 pb-[10px] pl-8 ${
        mine ? "self-end bg-[#1b4933] pr-8" : "self-start bg-[#212322] pr-[33px]"
      } ${stacked ? "grid" : "flex items-end gap-7"}`}
    >
      {tail && <Tail mine={mine} />}
      <p
        className={`relative mb-[13px] whitespace-pre text-[37px] text-white ${
          stacked ? "col-start-1 row-start-1 leading-[50px]" : "leading-[48px]"
        }`}
      >
        {children}
      </p>
      <div
        className={`relative flex items-center gap-2 text-[25px] leading-[32px] tabular-nums ${
          mine ? "text-[#8db39c]" : "text-[#9b9c9b]"
        } ${stacked ? "col-start-1 row-start-1 self-end justify-self-end" : ""}`}
      >
        <time>{time}</time>
        {mine && <Ticks />}
      </div>
    </li>
  );
}

interface CallCardProps {
  title: string;
  detail: string;
  time: string;
  missed?: boolean;
}

function CallCard({ title, detail, time, missed }: CallCardProps) {
  return (
    <li className="w-fit self-start">
      <button
        type="button"
        className="flex items-end rounded-[46px] border-[9px] border-[#202121] bg-[#1b1b1b] py-[14px] pr-[25px] pl-[22px] text-left"
      >
        <span className="my-2 flex size-[123px] items-center justify-center rounded-full bg-[#121212]">
          <svg
            className={missed ? "size-[46px] text-[#f2325a]" : "size-[46px] text-white"}
            viewBox="0 0 44 44"
            fill="currentColor"
            aria-hidden="true"
          >
            <path d="M4 2C6 .5 10 .5 12 3L15.500 9C17 11.500 16.500 13.500 15 15L13 17C12 18.500 12 19.500 13 21C16 25 18.500 27 22 29.500C24 31 25 31 26.500 29.500L29 27.500C31 26 33 26.500 35 27.700L41 32C43.500 33.800 43.500 36 42 38.500C40 42 36 43.900 32 43.500C27 42.800 20 39.500 12.500 32C4 23.500 0 14.500 0 9C0 6 1.500 4 4 2Z" />
            <path
              d="M43 1L25.500 18.500M25.500 4.500V19H41"
              fill="none"
              stroke="currentColor"
              strokeWidth="2.600"
            />
          </svg>
        </span>
        <span className="ml-[22px] flex flex-col self-center text-[33px] leading-[44px]">
          <span className="font-semibold text-white">{title}</span>
          <span className="text-[#8e8e8e]">{detail}</span>
        </span>
        <time className="ml-9 text-[25px] leading-[32px] text-[#9b9c9b] tabular-nums">{time}</time>
      </button>
    </li>
  );
}

interface VoiceNoteProps {
  length: string;
  time: string;
  bars: number[];
  tail?: boolean;
}

function VoiceNote({ length, time, bars, tail }: VoiceNoteProps) {
  return (
    <li className="flex items-center gap-6 self-start">
      <div className="relative flex items-center rounded-[52px] bg-[#212322] py-[23px] pr-[31px] pl-[71px]">
        {tail && <Tail />}
        <button type="button" aria-label="Play voice message" className="relative">
          <svg className="h-12 w-[43px]" viewBox="0 0 43 48" aria-hidden="true">
            <path
              d="M2 2L41 24L2 46Z"
              fill="#9d9e9d"
              stroke="#9d9e9d"
              strokeWidth="3"
              strokeLinejoin="round"
            />
          </svg>
        </button>
        <div className="relative ml-[42px] h-[125px] w-[425px]">
          <div className="flex h-full items-center">
            <span className="size-[33px] rounded-full bg-[#559ff9]" />
            <div className="ml-[5px] flex flex-1 items-center justify-between">
              {bars.map((height, i) => (
                <span key={i} className="w-[7px] rounded-full bg-[#5d5e5e]" style={{ height }} />
              ))}
            </div>
          </div>
          <div className="absolute inset-x-0 -bottom-4 flex justify-between text-[25px] leading-[32px] text-[#9b9c9b] tabular-nums">
            <span>{length}</span>
            <time>{time}</time>
          </div>
        </div>
        <div className="relative ml-[54px]">
          <svg className="size-[125px]" viewBox="0 0 125 125" role="img" aria-label="Contact photo">
            <circle cx="62.500" cy="62.500" r="62" fill="#10455f" stroke="#1a4d5e" />
            <ellipse cx="62.500" cy="51.500" rx="9.500" ry="10.500" fill="#8fd8f6" />
            <path
              d="M43 80C44 71 52 65.500 62.500 65.500S81 71 82 80Q82.500 83.500 79 83.500H46Q42.500 83.500 43 80Z"
              fill="#8fd8f6"
            />
          </svg>
          <svg
            className="absolute -left-5 bottom-0 h-[60px] w-10"
            viewBox="0 0 40 60"
            fill="none"
            aria-hidden="true"
          >
            <path d="M20 14V34" stroke="#17242f" strokeWidth="22" strokeLinecap="round" />
            <path d="M6 30V33A14 14 0 0 0 34 33V30M20 48V55" stroke="#17242f" strokeWidth="7" strokeLinecap="round" />
            <path d="M20 14V33" stroke="#559ff9" strokeWidth="17" strokeLinecap="round" />
            <path
              d="M6 30V33A14 14 0 0 0 34 33V30M20 48V56"
              stroke="#5a9bea"
              strokeWidth="3"
              strokeLinecap="round"
            />
          </svg>
        </div>
      </div>
      <button
        type="button"
        aria-label="Reply with voice message"
        className="flex size-[89px] items-center justify-center rounded-full bg-[#6a6b6d]"
      >
        <svg className="size-[89px]" viewBox="0 0 89 89" fill="none" aria-hidden="true">
          <path d="M48 28V44" stroke="#dededf" strokeWidth="16" strokeLinecap="round" />
          <path
            d="M64 46C62 55 56 60 48 60Q43 60 39.500 58M48 60V69"
            stroke="#dededf"
            strokeWidth="4.500"
            strokeLinecap="round"
          />
          <circle cx="28" cy="47.500" r="13.500" fill="#6a6b6d" />
          <circle cx="28" cy="47.500" r="11.500" fill="#e2e2e3" />
          <path
            d="M27 41L22.500 45.500L27 50M23 45.500H29.500A4 4 0 0 1 29.500 53H27"
            stroke="#6a6b6d"
            strokeWidth="2.400"
          />
        </svg>
      </button>
    </li>
  );
}

const firstNote = [
  36, 65, 58, 37, 48, 50, 37, 53, 41, 51, 44, 29, 13, 11, 39, 64, 40, 28, 41, 41, 42, 17, 32, 32, 14,
  32, 26, 26, 21, 21, 7, 7, 7,
];
const secondNote = [
  47, 9, 58, 50, 40, 54, 22, 53, 47, 43, 22, 36, 11, 7, 7, 11, 7, 7, 8, 15, 23, 32, 59, 27, 41, 21,
  12, 7, 7, 9, 26, 42, 7,
];

function App() {
  return (
    <div className="flex h-screen flex-col border-y-[16px] border-black bg-[#0b0b0b] font-['Inter',sans-serif]">
      <header className="flex h-[37px] shrink-0 items-end overflow-hidden bg-[#141414] px-[37px]">
        <button
          type="button"
          aria-label="Back"
          className="mb-7 size-[136px] shrink-0 rounded-full border-2 border-[#363636] bg-[#171717]"
        />
        <span className="mb-[34px] ml-[11px] size-[120px] shrink-0 rounded-full bg-[#153a49]" />
        <button
          type="button"
          aria-label="Call"
          className="mb-7 ml-auto h-[136px] w-[290px] shrink-0 rounded-full border-2 border-[#363636] bg-[#171717]"
        />
      </header>

      <main className="relative min-h-0 flex-1 overflow-hidden">
        <Wallpaper />
        <ul className="relative flex flex-col gap-3 px-[46px] pt-[3px]">
          <Message time="19:12">Love</Message>
          <Message time="20:08" tail>
            Love <Heart />
          </Message>
          <li className="mt-6 flex flex-col">
            <ul className="flex flex-col gap-9">
              <Message time="20:12" mine tail>
                Helo
              </Message>
              <Message time="20:12" tail>
                O busy keng now love <Heart />
              </Message>
              <Message time="20:15" mine tail>
                I’m in bed
              </Message>
            </ul>
          </li>
          <li className="mt-[25px]">
            <ul className="flex flex-col gap-3">
              <CallCard title="Missed voice call" detail="Tap to call back" time="20:46" missed />
              <CallCard title="Voice call" detail="7 min" time="20:57" />
              <VoiceNote length="0:02" time="21:05" bars={firstNote} tail />
            </ul>
          </li>
          <li className="mt-[25px]">
            <ul className="flex flex-col">
              <Message time="21:07" mine tail>
                I’ll call you
              </Message>
            </ul>
          </li>
          <li className="mt-[25px]">
            <ul className="flex flex-col gap-3">
              <VoiceNote length="0:07" time="21:08" bars={secondNote} />
              <CallCard title="Missed voice call" detail="Tap to call back" time="22:38" missed />
              <Message time="22:39" stacked>
                Good  night sweet  dream my love <Heart />
                <br />
                <Heart />
                <Heart />
                <AnatomicalHeart />
                <AnatomicalHeart />
                <AnatomicalHeart />
                <AnatomicalHeart />
              </Message>
            </ul>
          </li>
        </ul>

        <button
          type="button"
          aria-label="Scroll to latest"
          className="absolute right-[25px] bottom-[66px] flex size-[88px] items-center justify-center rounded-full bg-[#212322]"
        >
          <svg
            className="h-6 w-10"
            viewBox="0 0 40 24"
            fill="none"
            stroke="#fff"
            strokeWidth="5"
            strokeLinecap="round"
            strokeLinejoin="round"
            aria-hidden="true"
          >
            <path d="M5 3L20 19L35 3" />
          </svg>
        </button>
      </main>

      <footer className="h-[13px] shrink-0 bg-[#121212]" />
    </div>
  );
}

export default App;
